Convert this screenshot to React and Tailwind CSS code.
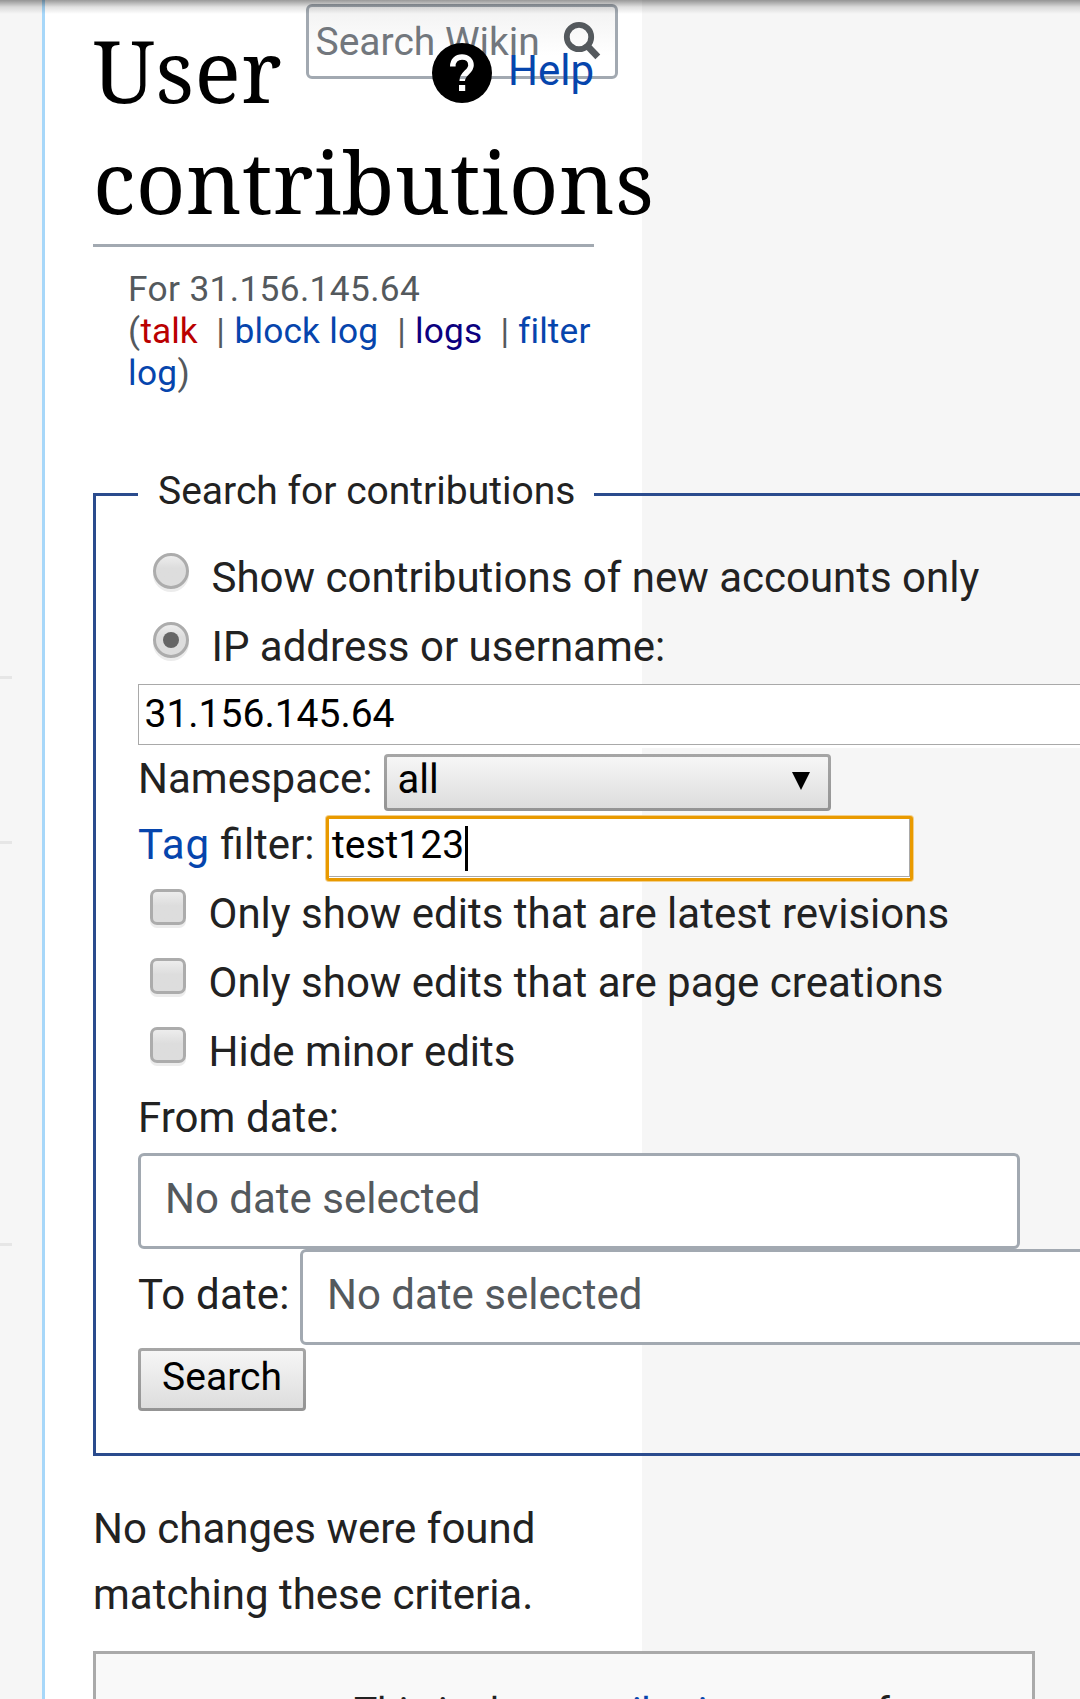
import React from "react";

const link = "text-[#0645ad]";

function Radio({ checked }) {
  return (
    <span className="mt-[10px] ml-[15px] flex h-9 w-9 shrink-0 items-center justify-center rounded-full border-[3px] border-[#acacac] bg-linear-to-b from-[#ededed] via-[#dddddd] via-40% to-[#dddddd] shadow-[0_3px_0_#ececec]">
      {checked && <span className="h-4 w-4 rounded-full bg-[#666666]" />}
    </span>
  );
}

function Checkbox() {
  return (
    <span className="mt-[10px] ml-3 h-9 w-9 shrink-0 rounded-[7px] border-[3px] border-[#acacac] bg-linear-to-b from-[#ededed] via-[#dddddd] via-45% to-[#dddddd] shadow-[0_3px_0_#ececec]" />
  );
}

function RadioRow({ checked, children }) {
  return (
    <label className="flex h-[69px] leading-[69px]">
      <Radio checked={checked} />
      <span className="ml-[22.5px]">{children}</span>
    </label>
  );
}

function CheckRow({ children }) {
  return (
    <label className="flex h-[69px] leading-[69px]">
      <Checkbox />
      <span className="ml-[22.5px]">{children}</span>
    </label>
  );
}

function DateBox({ className }) {
  return (
    <div
      className={
        "h-24 shrink-0 rounded-md border-[3px] border-[#a2a9b1] bg-white pl-6 leading-[86px] text-[#54595d] " +
        className
      }
    >
      No date selected
    </div>
  );
}

function SearchBox() {
  return (
    <div className="absolute top-1 left-[306px] flex h-[75px] w-[312px] rounded-md border-[3px] border-[#a2a9b1] bg-linear-to-b from-[#f2f2f2] to-white to-70%">
      <span className="ml-[6.5px] w-[247.5px] text-[39px] leading-[70px] text-[#72777d]">Search Wikin</span>
      <svg className="mt-[14px] h-10 w-10 shrink-0" viewBox="563 21 40 40" fill="none" stroke="#54595d">
        <circle cx="579" cy="37" r="12.2" strokeWidth="5.8" />
        <path d="M587 45.5 L597.8 56.8" strokeWidth="6.8" />
      </svg>
    </div>
  );
}

function HelpLink() {
  return (
    <div className="absolute top-[43px] left-[432px] flex">
      <svg className="h-[60px] w-[60px]" viewBox="0 0 60 60">
        <mask id="help-cutout">
          <rect width="60" height="60" fill="white" />
          <path
            d="M20.8 23.5 C20.8 17.5 24.8 14 30 14 C35.4 14 39 17.3 39 22.2 C39 29 30.2 30 30.2 38"
            fill="none"
            stroke="black"
            strokeWidth="5.6"
          />
          <rect x="27" y="42" width="6.2" height="6" fill="black" />
        </mask>
        <circle cx="30" cy="30" r="30" fill="black" mask="url(#help-cutout)" />
      </svg>
      <a className={"ml-4 leading-[56px] " + link}>Help</a>
    </div>
  );
}

export default function App() {
  return (
    <div className="relative flex h-[1699px] w-[1080px] overflow-hidden bg-[#f6f6f6] font-['Roboto',sans-serif] text-[42px] text-[#222222]">
      <aside className="flex w-[42px] shrink-0 flex-col">
        <div className="mt-[676px] h-[3px] w-3 bg-[#e6e6e6]" />
        <div className="mt-[162px] h-[3px] w-3 bg-[#e6e6e6]" />
        <div className="mt-[399px] h-[3px] w-3 bg-[#e6e6e6]" />
      </aside>

      <main className="h-full w-[600px] shrink-0 border-l-[3px] border-[#a7d7f9] bg-white pt-[14px] pl-12 whitespace-nowrap">
        <h1 className="h-[233px] w-[501px] border-b-[3px] border-[#a2a9b1] font-['Noto_Serif',serif] text-[86.4px] leading-[111px] tracking-[0.3px] text-black">
          User
          <br />
          contributions
        </h1>

        <div className="mt-[21px] pl-[35px] text-[35.28px] leading-[42px] text-[#54595d]">
          <div className="tracking-[0.36px]">For 31.156.145.64</div>
          <div className="flex">
            <span>(</span>
            <a className="ml-[0.5px] text-[#ba0000]">talk</a>
            <span className="ml-[18.5px]">|</span>
            <a className={"ml-[9.5px] tracking-[0.2px] " + link}>block log</a>
            <span className="ml-[19px]">|</span>
            <a className="ml-[9px] tracking-[0.2px] text-[#0b0080]">logs</a>
            <span className="ml-[18px]">|</span>
            <a className={"ml-[9px] tracking-[0.15px] " + link}>filter</a>
          </div>
          <div>
            <a className={"tracking-[0.3px] " + link}>log</a>)
          </div>
        </div>

        <fieldset className="mt-[70px] h-[992px] w-[1100px] border-[3px] border-[#2a4b8d] pl-[42px]">
          <legend className="h-[61px] w-[456px] pl-5 text-[39px] leading-[55px]">Search for contributions</legend>

          <div className="pt-[18px]">
            <RadioRow>Show contributions of new accounts only</RadioRow>
            <RadioRow checked>IP address or username:</RadioRow>
          </div>

          <div className="mt-[3px] h-16 bg-white">
            <div className="h-[61px] border border-[#a9a9a9] pl-[5.5px] text-[39px] leading-[59px] text-black">
              31.156.145.64
            </div>
          </div>

          <div className="mt-[6px] flex leading-[49px]">
            <span className="w-[246px] shrink-0">Namespace:</span>
            <div className="flex h-[57px] w-[447px] justify-between rounded-[4px] bg-linear-to-b from-[#a6a6a6] to-[#949494] p-[3px]">
              <div className="flex flex-1 justify-between rounded-[1px] bg-linear-to-b from-[#f6f6f6] to-[#dddddd] pr-[18px] pl-[10.5px] text-[40px] leading-[46px] text-black">
                <span>all</span>
                <svg className="mt-[15px] h-[18px] w-[18px]" viewBox="0 0 18 18">
                  <path d="M0 0H18L9 18Z" fill="black" />
                </svg>
              </div>
            </div>
          </div>

          <div className="mt-[5px] flex h-[65px] leading-[57px]">
            <span className="w-[188px] shrink-0">
              <a className={"tracking-[1px] " + link}>Tag</a> filter:
            </span>
            <div className="h-[65px] w-[587px] rounded-[3px] border-[3px] border-[#e99a00] bg-white pb-px shadow-[0_0_0_1px_#f3cf8a]">
              <div className="flex h-[58px] border-r border-b border-[#a9a9a9] pl-[3px] text-[39px] leading-[53px] text-black">
                test123
                <span className="mt-[7px] ml-[0.5px] h-[45px] w-[3px] bg-black" />
              </div>
            </div>
          </div>

          <div className="-mt-[2px]">
            <CheckRow>Only show edits that are latest revisions</CheckRow>
            <CheckRow>Only show edits that are page creations</CheckRow>
            <CheckRow>Hide minor edits</CheckRow>
          </div>

          <div className="leading-[63px] tracking-[0.05px]">From date:</div>
          <DateBox className="mt-1 w-[882px]" />
          <div className="flex leading-[92px]">
            <span className="w-[162px] shrink-0 tracking-[0.2px]">To date:</span>
            <DateBox className="w-[882px]" />
          </div>

          <div className="mt-[3px] h-[63px] w-[168px] rounded-[4px] bg-linear-to-b from-[#a6a6a6] to-[#949494] p-[3px]">
            <div className="h-full rounded-[1px] bg-linear-to-b from-[#f6f6f6] to-[#dddddd] text-center text-[39px] leading-[52px] text-black">
              Search
            </div>
          </div>
        </fieldset>

        <p className="mt-10 leading-[66px]">
          No changes were found
          <br />
          matching these criteria.
        </p>

        <div className="mt-[23px] h-[120px] w-[942px] border-[3px] border-[#aaaaaa] bg-[#f9f9f9] pt-7 pl-[258px] text-[39px] leading-[60px]">
          This is the <a className={link}>contributions</a> page for
        </div>
      </main>

      <SearchBox />
      <HelpLink />
      <div className="absolute inset-x-0 top-0 h-3.5 bg-linear-to-b from-black/40 via-black/12 to-transparent" />
    </div>
  );
}
